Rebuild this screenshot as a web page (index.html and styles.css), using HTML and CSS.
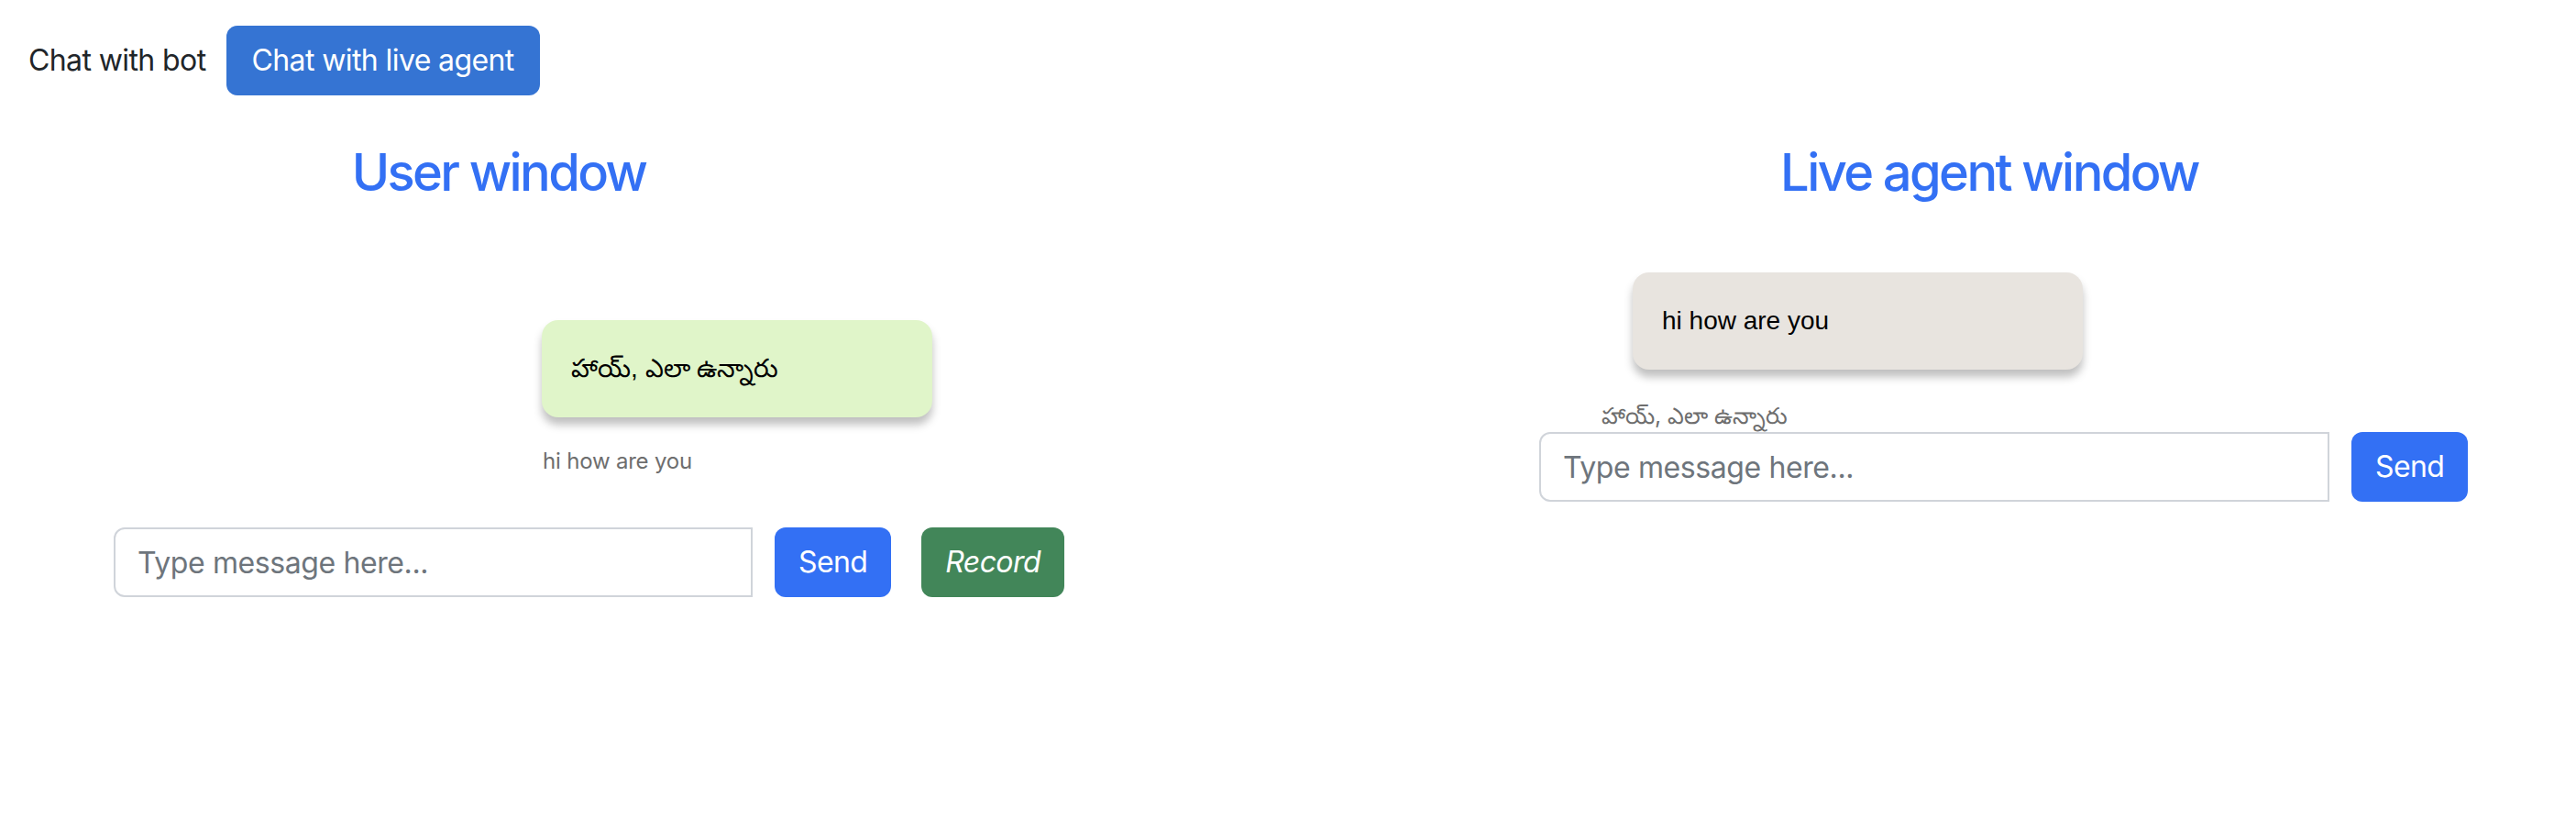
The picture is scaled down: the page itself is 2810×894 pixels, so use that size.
FILE: index.html
```html
<!DOCTYPE html>
<html lang="en">
<head>
<meta charset="utf-8">
<title>Chat</title>
<link rel="stylesheet" href="styles.css">
</head>
<body>
<nav class="nav">
  <button class="nav-btn nav-btn-plain">Chat with bot</button>
  <button class="nav-btn nav-btn-active">Chat with live agent</button>
</nav>
<main class="panes">
  <section class="pane pane-user">
    <h3 class="pane-title title-user">User window</h3>
    <div class="messages messages-user">
      <div class="bubble bubble-green bubble-user">హాయ్, ఎలా ఉన్నారు</div>
      <small class="note note-user">hi how are you</small>
    </div>
    <div class="compose compose-user">
      <input class="field field-user" type="text" placeholder="Type message here...">
      <button class="btn btn-send">Send</button>
      <button class="btn btn-record"><em>Record</em></button>
    </div>
  </section>
  <section class="pane pane-agent">
    <h3 class="pane-title title-agent">Live agent window</h3>
    <div class="messages messages-agent">
      <div class="bubble bubble-grey bubble-agent">hi how are you</div>
      <small class="note note-agent">హాయ్, ఎలా ఉన్నారు</small>
    </div>
    <div class="compose compose-agent">
      <input class="field field-agent" type="text" placeholder="Type message here...">
      <button class="btn btn-send">Send</button>
    </div>
  </section>
</main>
</body>
</html>
```
FILE: styles.css
```css
* { box-sizing: border-box; }

body {
  margin: 0;
  background: #ffffff;
  color: #212529;
  font-family: Inter, "Noto Sans", sans-serif;
  font-size: 32px;
  line-height: 48px;
  letter-spacing: -0.6px;
}

.nav {
  display: flex;
  padding: 28px 0 0 3px;
}

.nav-btn {
  font: inherit;
  letter-spacing: inherit;
  line-height: 48px;
  padding: 12px 26px;
  border: 2px solid transparent;
  border-radius: 12px;
  background: transparent;
  color: #212529;
}

.nav-btn-plain {
  padding-right: 20px;
}

.nav-btn-active {
  background: #3574d3;
  color: #ffffff;
}

.panes {
  display: flex;
  align-items: flex-start;
}

.pane {
  display: flex;
  flex-direction: column;
  align-items: flex-start;
  padding-left: 124px;
}

.pane-user {
  width: 1555px;
}

.pane-title {
  margin: 49px 0 0;
  font-size: 56px;
  line-height: 70px;
  font-weight: 500;
  letter-spacing: -2.6px;
  color: #3370f4;
  text-align: center;
}

.title-user { width: 840px; }
.title-agent { width: 982px; }

.messages {
  display: flex;
  flex-direction: column;
  align-items: flex-start;
}

.messages-user {
  margin: 126px 0 0 467px;
}

.messages-agent {
  margin: 74px 0 0 68px;
}

.bubble {
  font-family: "Liberation Sans", Arial, sans-serif;
  font-size: 28px;
  line-height: 42px;
  letter-spacing: 0;
  padding: 32px 32px;
  border-radius: 18px;
  color: #000000;
  box-shadow: 0 8px 10px rgba(0, 0, 0, 0.25);
}

.bubble-green { background: #e0f5c9; }
.bubble-grey { background: #e8e4df; }

.bubble-user { width: 426px; }
.bubble-agent { width: 491px; margin-left: 34px; }

.note {
  font-size: 24px;
  line-height: 42px;
  letter-spacing: -0.2px;
  color: #6e6e6e;
}

.note-user {
  margin-top: 27px;
  margin-left: 1px;
}

.note-agent {
  margin-top: 33px;
  font-size: 25px;
  line-height: 34px;
  letter-spacing: 0;
}

.compose {
  display: flex;
  align-items: center;
}

.compose-user { margin-top: 51px; }
.compose-agent { margin-top: 1px; }

.field {
  font: inherit;
  letter-spacing: -0.4px;
  font-size: 32px;
  line-height: 48px;
  height: 76px;
  padding: 12px 24px;
  border: 2px solid #d0d4da;
  border-radius: 12px 0 0 12px;
  color: #212529;
  background: #ffffff;
}

.field::placeholder { color: #6e757c; }

.field-user { width: 697px; }
.field-agent { width: 862px; }

.btn {
  font: inherit;
  letter-spacing: inherit;
  line-height: 48px;
  padding: 12px 24px;
  border: 2px solid transparent;
  border-radius: 12px;
  color: #ffffff;
}

.btn-send {
  background: #3370f4;
  margin-left: 24px;
}

.btn-record {
  background: #428659;
  margin-left: 33px;
}

.btn-record em { font-style: italic; }
```
